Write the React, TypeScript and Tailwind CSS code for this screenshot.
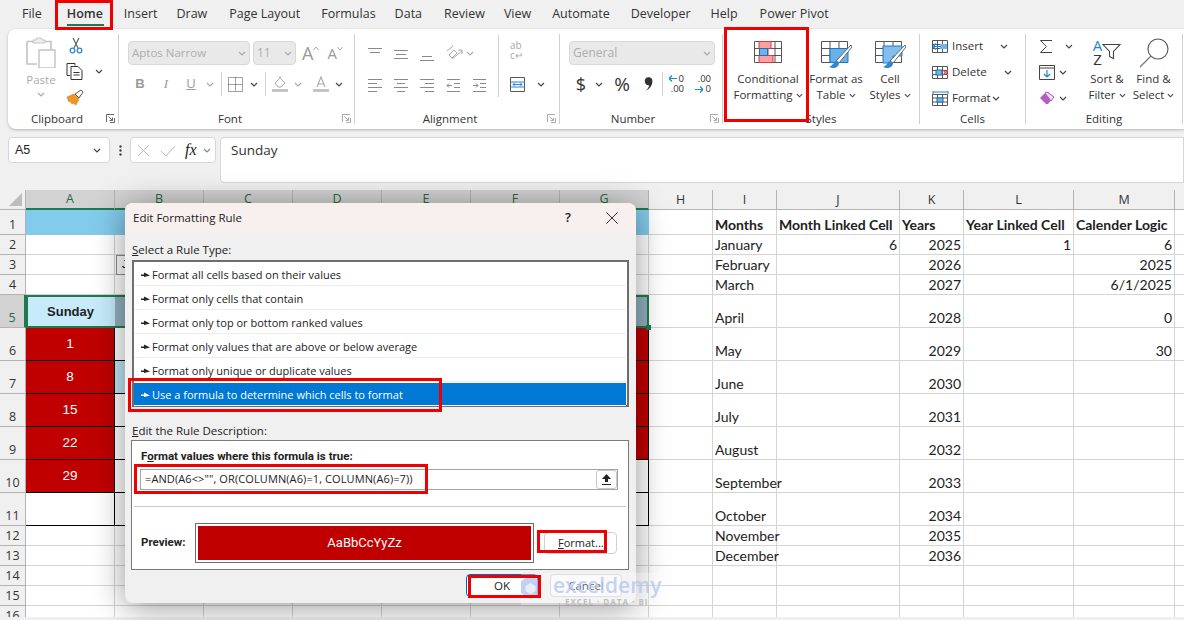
import React from "react";

const Chev = ({ c = "#444", w = 8 }: { c?: string; w?: number }) => (
  <svg width={w} height="5" viewBox="0 0 8 5" className="shrink-0"><path d="M1 1l3 3 3-3" fill="none" stroke={c} strokeWidth="1.2" /></svg>
);

const Launcher = ({ dim }: { dim?: boolean }) => (
  <svg width="9" height="9" viewBox="0 0 9 9" className="shrink-0 mb-[2px]"><path d="M.5 8V.5H8M8.5 4v4.5H4M2.5 2.5l4 4M6.5 3.5v3h-3" fill="none" stroke={dim ? "#aaa" : "#666"} strokeWidth="1" /></svg>
);

const Group = ({ w, lw, label, launcher, dim, children }: { w: number; lw: number; label: string; launcher?: boolean; dim?: boolean; children: React.ReactNode }) => (
  <div className="flex shrink-0 h-full" style={{ width: w }}>
    <div className="flex flex-col flex-1 min-w-0 h-full">
      <div className="flex-1 min-h-0">{children}</div>
      <div className="flex items-center h-[16px] mb-[2px]">
        <div className="text-center text-[#333] text-[11.5px] leading-[16px] whitespace-nowrap" style={{ width: lw }}>{label}</div>
        {launcher ? <div className="ml-auto mr-[3px] flex"><Launcher dim={dim} /></div> : null}
      </div>
    </div>
    <div className="w-px bg-[#d0d0d0] my-[5px] shrink-0" />
  </div>
);

const Lines = ({ rows }: { rows: [number, number, number][] }) => (
  <svg width="15" height="15" viewBox="0 0 15 15" className="shrink-0">
    {rows.map(([y, a, b], i) => <path key={i} d={`M${a} ${y + 0.5}H${b}`} stroke="#8a8a8a" strokeWidth="1" />)}
  </svg>
);

const Scissors = () => (
  <svg width="14" height="17" viewBox="0 0 14 17"><path d="M4 1l5 10M10 1L5 11" stroke="#555" strokeWidth="1.1" fill="none" /><circle cx="3.5" cy="13.5" r="2.3" fill="none" stroke="#2b88d8" strokeWidth="1.3" /><circle cx="10.5" cy="13.5" r="2.3" fill="none" stroke="#2b88d8" strokeWidth="1.3" /></svg>
);
const CopyIcon = () => (
  <svg width="18" height="17" viewBox="0 0 18 17"><path d="M9 2.5V.5H1v12h3" fill="none" stroke="#333" strokeWidth="1" /><path d="M5 3.5h7l4 4v9H5z" fill="#fff" stroke="#333" strokeWidth="1" /><path d="M7.5 9.5h6M7.5 12h6" stroke="#333" /></svg>
);
const Painter = () => (
  <svg width="18" height="17" viewBox="0 0 18 17"><path d="M1 8l7-3 5 5-3 6-3-2-1 1-2-3-1 1z" fill="#f29423" stroke="#d9791a" strokeWidth=".6" /><path d="M9 5l4 4 4-6-2-2z" fill="#fff" stroke="#555" strokeWidth="1" /></svg>
);
const ClipIcon = () => (
  <svg width="30" height="31" viewBox="0 0 30 31"><path d="M1 4.5h6M19 4.5h6V13M1 4.5V27h10" fill="none" stroke="#c3c3c3" strokeWidth="1.6" /><path d="M7 6V3h3l1-2h4l1 2h3v3z" fill="#eee" stroke="#c3c3c3" /><path d="M13 13h16v18H13z" fill="#fff" stroke="#c3c3c3" strokeWidth="1.4" /></svg>
);
const BigA = ({ size, up }: { size: number; up: boolean }) => (
  <span className="flex items-start text-[#9a9a9a]"><span style={{ fontSize: size, lineHeight: "22px" }}>A</span><svg width="6" height="5" viewBox="0 0 6 5" className="mt-[4px]"><path d={up ? "M.5 4L3 1l2.5 3" : "M.5 1L3 4l2.5-3"} fill="none" stroke="#a8a8a8" /></svg></span>
);
const Borders = () => (
  <svg width="15" height="15" viewBox="0 0 15 15"><path d="M.5.5h14v14H.5zM7.500.5v14M.5 7.500h14" fill="none" stroke="#444" strokeDasharray="1 1" /></svg>
);
const Fill = () => (
  <svg width="16" height="16" viewBox="0 0 16 16"><path d="M3 7l5-5 5 5-4 4H6z" fill="none" stroke="#aaa" strokeWidth="1" /><path d="M8 2V0" stroke="#aaa" /><rect y="13" width="16" height="3" fill="#c4c4c4" /></svg>
);
const FontColor = () => (
  <svg width="16" height="16" viewBox="0 0 16 16"><path d="M4 11L8 1l4 10M5.4 8h5.2" fill="none" stroke="#aaa" strokeWidth="1.1" /><rect y="13" width="16" height="3" fill="#c4c4c4" /></svg>
);
const Orient = () => (
  <svg width="17" height="16" viewBox="0 0 17 16"><path d="M1 6l6-5M3 10l5-5 3 3-5 5z" fill="none" stroke="#aaa" /><path d="M6 14L16 6M12 5h4v4" fill="none" stroke="#aaa" /></svg>
);
const Merge = () => (
  <svg width="15" height="15" viewBox="0 0 15 15"><path d="M.5.5h14v14H.5z" fill="#fff" stroke="#555" /><path d="M.5 5h14M.5 10h14" stroke="#2b88d8" /><path d="M3 7.500h9M3 7.500l2-2M3 7.500l2 2M12 7.500l-2-2M12 7.500l-2 2" stroke="#2b88d8" fill="none" /></svg>
);
const Dec = ({ left }: { left: boolean }) => (
  <span className="flex flex-col items-end text-[9.5px] leading-[10px] text-[#333] w-[16px] relative">
    <span>{left ? "0" : ".00"}</span>
    <span>{left ? ".00" : "0"}</span>
    <svg width="9" height="7" viewBox="0 0 9 7" className={left ? "absolute left-0 top-[1px]" : "absolute left-0 bottom-[1px]"}>
      <path d={left ? "M9 3.500H1M1 3.500l3-3M1 3.500l3 3" : "M0 3.500h8M8 3.500l-3-3M8 3.500l-3 3"} fill="none" stroke="#1a86d0" strokeWidth="1.1" />
    </svg>
  </span>
);
const CondIcon = () => (
  <svg width="28" height="22" viewBox="0 0 28 22">
    <path d="M.5.5h27v21H.5zM.5 7.500h27M.5 14.500h27M7 .5v21M14 .5v21M21 .5v21" fill="none" stroke="#555" />
    <path d="M5 .5h12v7H5z" fill="#ff9ea3" stroke="#e03a3a" />
    <path d="M5 14.500h14v7H5z" fill="#ff9ea3" stroke="#e03a3a" />
    <path d="M5.500 7.500h8v7h-8z" fill="#74b1e4" stroke="#1b6fb8" />
  </svg>
);
const TableBrush = ({ full }: { full: boolean }) => (
  <svg width="31" height="28" viewBox="0 0 31 28">
    <path d="M.5.5h26v21H.5zM.5 7.500h26M.5 14.500h26M9 .5v21M18 .5v21" fill="none" stroke="#555" />
    {full ? <path d="M8 5h19v10H18v7H8z" fill="#85bdee" stroke="#1a79c7" /> : <path d="M9 7.500h18v14H9z" fill="#6cb0e8" stroke="#1a79c7" />}
    <path d="M30 4l-15 16 3 2L31 6z" fill="#fff" stroke="#666" />
    <path d="M15 20c-3 1-2 4-7 6 4 2 10 1 10-4z" fill="#2b88d8" />
  </svg>
);
const CellIns = ({ kind }: { kind: "i" | "d" | "f" }) => (
  <svg width="17" height="15" viewBox="0 0 17 15">
    {kind === "f" ? <path d="M1 1h15M1 0v3M16 0v3" stroke="#1b88d6" fill="none" /> : null}
    <path d={kind === "f" ? "M.5 3.500h15v11H.5zM5.500 3.500v11M10.500 3.500v11M.5 7h15M.5 11h15" : "M.5 1.500h15v12H.5zM5.500 1.500v12M10.500 1.500v12M.5 5.500h15M.5 9.500h15"} fill="none" stroke="#555" />
    {kind === "i" ? <><rect x="8" y="5" width="7" height="5" fill="#73b5ea" /><path d="M9 7.500H1M1 7.500l3-3M1 7.500l3 3" stroke="#1b88d6" fill="none" strokeWidth="1.2" /></> : null}
    {kind === "d" ? <><rect x="4" y="5" width="6" height="5" fill="#73b5ea" stroke="#1b6fb8" /><path d="M11 5l5 5M16 5l-5 5" stroke="#e84a4a" strokeWidth="1.2" /></> : null}
    {kind === "f" ? <rect x="5" y="7" width="6" height="4" fill="#73b5ea" stroke="#1b6fb8" /> : null}
  </svg>
);
const FillDown = () => (
  <svg width="16" height="15" viewBox="0 0 16 15"><path d="M.5.5h15v14H.5z" fill="#fff" stroke="#444" /><path d="M.5 3h15" stroke="#444" /><path d="M8 5v7M8 12l-3-3M8 12l3-3" stroke="#1b88d6" fill="none" strokeWidth="1.2" /></svg>
);
const Eraser = () => (
  <svg width="16" height="14" viewBox="0 0 16 14"><path d="M1 7l6-6 2 0 6 5-6 7-2 0z" fill="#b65bbf" /><path d="M6 2l2-1 7 5-3 4z" fill="#f3e3f5" stroke="#b65bbf" /></svg>
);
const Sigma = () => (
  <svg width="14" height="15" viewBox="0 0 14 15"><path d="M13 1.500H1.500L7.500 7.500 1.500 13.500H13" fill="none" stroke="#444" strokeWidth="1" /></svg>
);
const SortIcon = () => (
  <span className="flex items-center h-[28px]">
    <span className="flex flex-col items-center text-[15px] leading-[14px]"><span className="text-[#1b88d6]">A</span><span className="text-[#333]">Z</span></span>
    <svg width="19" height="17" viewBox="0 0 19 17" className="mb-[1px]"><path d="M1 1.500h17l-6.500 7v7l-4-2v-5z" fill="none" stroke="#444" strokeWidth="1.1" /></svg>
  </span>
);
const Magnifier = () => (
  <svg width="30" height="30" viewBox="0 0 30 30"><circle cx="19" cy="11" r="10" fill="none" stroke="#555" strokeWidth="1.1" /><path d="M12 18L1 29" stroke="#777" strokeWidth="1.3" /></svg>
);

const TwoLine = ({ a, b, w, icon }: { a: string; b: string; w: number; icon: React.ReactNode }) => (
  <div className="flex flex-col items-center shrink-0 pt-[9px]" style={{ width: w }}>
    <div className="h-[33px] flex items-start justify-center">{icon}</div>
    <div className="text-[11.5px] leading-[16px] text-[#333] whitespace-nowrap">{a}</div>
    <div className="text-[11.5px] leading-[16px] text-[#333] whitespace-nowrap flex items-center gap-[3px]">{b}<Chev w={7} /></div>
  </div>
);

const SmallRow = ({ icon, label, gap }: { icon: React.ReactNode; label: string; gap: number }) => (
  <div className="flex items-center h-[26px] pl-[12px] text-[11.5px] text-[#333]">
    <span className="w-[20px] flex">{icon}</span>{label}<span className="flex" style={{ marginLeft: gap }}><Chev /></span>
  </div>
);

const Ribbon = () => (
  <div className="ml-[8px] h-[100px] bg-white rounded-l-lg flex shadow-[0_1px_3px_rgba(0,0,0,0.25)]">
    <Group w={111} lw={98} label="Clipboard" launcher>
      <div className="flex pt-[8px]">
        <div className="w-[58px] flex flex-col items-center pl-[8px]">
          <ClipIcon />
          <div className="text-[11.5px] leading-[16px] mt-[4px] text-[#aaa]">Paste</div>
          <div className="mt-[4px]"><Chev c="#aaa" /></div>
        </div>
        <div className="flex flex-col">
          <div className="h-[26px] pl-[3px]"><Scissors /></div>
          <div className="h-[17px] flex items-center"><CopyIcon /><span className="ml-[11px] flex"><Chev /></span></div>
          <div className="mt-[9px] flex"><Painter /></div>
        </div>
      </div>
    </Group>
    <Group w={236} lw={222} label="Font" launcher dim>
      <div className="flex mt-[12px] pl-[9px] items-center h-[24px]">
        <div className="w-[122px] h-[24px] bg-[#e9e9e9] border border-[#d8d8d8] rounded-[4px] flex items-center justify-between px-[3px] text-[11.5px] text-[#aeaeae]">Aptos Narrow<Chev c="#aaa" /></div>
        <div className="w-[43px] ml-[3px] h-[24px] bg-[#e9e9e9] border border-[#d8d8d8] rounded-[4px] flex items-center justify-between px-[3px] text-[12px] text-[#aeaeae]">11<Chev c="#aaa" /></div>
        <div className="ml-[6px]"><BigA size={18} up /></div>
        <div className="ml-[8px]"><BigA size={15} up={false} /></div>
      </div>
      <div className="flex items-center h-[20px] mt-[9px] pl-[14px] text-[#9a9a9a] text-[13px]">
        <b className="w-[14px] text-center font-['Liberation_Sans',sans-serif]">B</b>
        <i className="w-[14px] ml-[12px] text-center font-['Liberation_Serif',serif]">I</i>
        <u className="w-[14px] ml-[11px] text-center">U</u>
        <span className="ml-[8px] flex"><Chev c="#aaa" /></span>
        <span className="w-px h-[24px] bg-[#d0d0d0] ml-[7px]" />
        <span className="ml-[6px] flex"><Borders /></span>
        <span className="ml-[7px] flex"><Chev /></span>
        <span className="w-px h-[24px] bg-[#d0d0d0] ml-[7px]" />
        <span className="ml-[6px] flex"><Fill /></span>
        <span className="ml-[6px] flex"><Chev c="#aaa" /></span>
        <span className="ml-[11px] flex"><FontColor /></span>
        <span className="ml-[6px] flex"><Chev /></span>
      </div>
    </Group>
    <Group w={205} lw={190} label="Alignment" launcher dim>
      <div className="flex pt-[6px] h-[70px]">
        <div className="pl-[13px] w-[143px] flex flex-col">
          <div className="flex h-[30px] items-center gap-[11px] pt-[6px]">
            <Lines rows={[[2, 0, 14], [6, 2, 12], [10, 15, 15]]} />
            <Lines rows={[[4, 0, 14], [8, 2, 12], [12, 0, 14]]} />
            <Lines rows={[[6, 15, 15], [10, 2, 12], [14, 0, 14]]} />
            <span className="flex"><Orient /></span>
            <span className="ml-[-8px] flex"><Chev c="#aaa" /></span>
          </div>
          <div className="flex h-[20px] items-center gap-[11px] mt-[9px]">
            <Lines rows={[[2, 0, 14], [6, 0, 9], [10, 0, 14], [14, 0, 9]]} />
            <Lines rows={[[2, 0, 14], [6, 3, 11], [10, 0, 14], [14, 3, 11]]} />
            <Lines rows={[[2, 0, 14], [6, 5, 14], [10, 0, 14], [14, 5, 14]]} />
            <svg width="15" height="15" viewBox="0 0 15 15"><path d="M1 2.500h13M8 6.500h6M8 10.500h6M1 14.500h13M6 8.500H1M1 8.500l2-2M1 8.500l2 2" fill="none" stroke="#8a8a8a" /></svg>
            <svg width="15" height="15" viewBox="0 0 15 15"><path d="M1 2.500h13M8 6.500h6M8 10.500h6M1 14.500h13M1 8.500h5M6 8.500l-2-2M6 8.500l-2 2" fill="none" stroke="#8a8a8a" /></svg>
          </div>
        </div>
        <div className="w-px h-[62px] bg-[#d0d0d0]" />
        <div className="flex flex-col pl-[11px]">
          <div className="h-[29px] pt-[5px] text-[#aaa] text-[10px] leading-[10px] w-[18px]"><div>ab</div><div>c↵</div></div>
          <div className="flex items-center mt-[13px] h-[15px]"><Merge /><span className="ml-[12px] flex"><Chev /></span></div>
        </div>
      </div>
    </Group>
    <Group w={163} lw={146} label="Number" launcher dim>
      <div className="pl-[9px] pt-[12px]">
        <div className="w-[146px] h-[24px] bg-[#e9e9e9] border border-[#d8d8d8] rounded-[4px] flex items-center justify-between px-[3px] text-[12px] text-[#aeaeae]">General<Chev c="#aaa" /></div>
        <div className="flex items-center h-[24px] mt-[7px] text-[#333]">
          <span className="ml-[5px] text-[18px] w-[14px] text-center leading-none">$</span>
          <span className="ml-[7px] flex"><Chev /></span>
          <span className="ml-[9px] text-[19px] w-[20px] text-center leading-none">%</span>
          <svg width="9" height="14" viewBox="0 0 8 12" className="ml-[12px]"><path d="M4 0a3.500 3.500 0 0 1 3.500 3.500C7.500 7 5 10.500 1.500 12 3.500 10 4.500 8.500 4.500 7A3.500 3.500 0 0 1 4 0z" fill="#333" /></svg>
          <span className="w-px h-[24px] bg-[#d0d0d0] ml-[9px]" />
          <span className="ml-[5px] flex"><Dec left /></span>
          <span className="ml-[11px] flex"><Dec left={false} /></span>
        </div>
      </div>
    </Group>
    <Group w={197} lw={196} label="Styles">
      <div className="flex pl-[6px]">
        <TwoLine a="Conditional" b="Formatting" w={78} icon={<div className="pt-[3px]"><CondIcon /></div>} />
        <TwoLine a="Format as" b="Table" w={58} icon={<div className="pt-[3px]"><TableBrush full={false} /></div>} />
        <TwoLine a="Cell" b="Styles" w={50} icon={<div className="pt-[3px]"><TableBrush full /></div>} />
      </div>
    </Group>
    <Group w={106} lw={106} label="Cells">
      <div className="pt-[4px]">
        <SmallRow icon={<CellIns kind="i" />} label="Insert" gap={17} />
        <SmallRow icon={<CellIns kind="d" />} label="Delete" gap={17} />
        <SmallRow icon={<CellIns kind="f" />} label="Format" gap={1} />
      </div>
    </Group>
    <Group w={157} lw={156} label="Editing">
      <div className="flex">
        <div className="w-[59px] pl-[13px] pt-[4px] flex flex-col">
          <div className="h-[26px] flex items-center"><Sigma /><span className="ml-[12px] flex"><Chev /></span></div>
          <div className="h-[26px] flex items-center"><FillDown /><span className="ml-[4px] flex"><Chev /></span></div>
          <div className="h-[26px] flex items-center"><Eraser /><span className="ml-[4px] flex"><Chev /></span></div>
        </div>
        <TwoLine a="Sort &" b="Filter" w={44} icon={<SortIcon />} />
        <TwoLine a="Find &" b="Select" w={49} icon={<Magnifier />} />
      </div>
    </Group>
  </div>
);

const tabs: [string, string][] = [
  ["File", ""], ["Home", "ml-[4px] w-[37px] -mr-[1px]"], ["Insert", ""], ["Draw", "-ml-[2px]"], ["Page Layout", "ml-[1px]"], ["Formulas", ""], ["Data", "-ml-[2px]"], ["Review", "ml-[1px]"], ["View", "-ml-[2px]"], ["Automate", ""], ["Developer", ""], ["Help", "-ml-[1px]"], ["Power Pivot", "ml-[1px]"],
];

const FormulaBar = () => (
  <div className="flex h-[46px] mt-[8px] mb-[7px] ml-[8px]">
    <div className="w-[102px] h-[26px] bg-white border border-[#d6d6d6] rounded-[4px] flex items-center justify-between pl-[6px] pr-[7px] text-[12.5px] text-[#222] font-['Liberation_Sans',sans-serif]">A5<Chev w={10} /></div>
    <div className="w-[20px] h-[26px] flex items-center justify-center text-[#444]"><svg width="3" height="11" viewBox="0 0 3 11"><circle cx="1.5" cy="1.5" r="1.2" fill="#444" /><circle cx="1.5" cy="5.5" r="1.2" fill="#444" /><circle cx="1.5" cy="9.5" r="1.2" fill="#444" /></svg></div>
    <div className="w-[86px] h-[26px] bg-white border border-[#d6d6d6] rounded-[4px] flex items-center pl-[6px]">
      <svg width="13" height="13" viewBox="0 0 13 13"><path d="M1 1l11 11M12 1L1 12" stroke="#b8b8b8" /></svg>
      <svg width="16" height="13" viewBox="0 0 16 13" className="ml-[10px]"><path d="M1 7l5 5 9-10" fill="none" stroke="#b8b8b8" /></svg>
      <i className="ml-[9px] text-[16px] leading-none font-['Liberation_Serif',serif] text-[#222]">fx</i>
      <span className="ml-[5px] flex"><Chev c="#888" w={10} /></span>
    </div>
    <div className="ml-[4px] flex-1 h-[46px] bg-white border border-[#d6d6d6] rounded-l-[4px] pl-[10px] pt-[2px] text-[13.5px] leading-[20px] text-[#333]">Sunday</div>
  </div>
);

const colW = "grid-cols-[26px_89px_89px_89px_89px_89px_89px_89px_64px_64px_123px_64px_110px_101px_64px]";
const rowH = "grid-rows-[20px_25px_20px_20px_20px_33px_33px_33px_33px_33px_33px_33px_20px_20px_20px_20px_20px]";
const cols = ["A", "B", "C", "D", "E", "F", "G", "H", "I", "J", "K", "L", "M", "N"];

const data: Record<number, Record<string, string>> = {
  1: { I: "Months", J: "Month Linked Cell", K: "Years", L: "Year Linked Cell", M: "Calender Logic" },
  2: { I: "January", J: "6", K: "2025", L: "1", M: "6" },
  3: { I: "February", K: "2026", M: "2025" },
  4: { I: "March", K: "2027", M: "6/1/2025" },
  5: { I: "April", K: "2028", M: "0" },
  6: { I: "May", K: "2029", M: "30" },
  7: { I: "June", K: "2030" },
  8: { I: "July", K: "2031" },
  9: { I: "August", K: "2032" },
  10: { I: "September", K: "2033" },
  11: { I: "October", K: "2034" },
  12: { I: "November", K: "2035" },
  13: { I: "December", K: "2036" },
};
const calA: Record<number, string> = { 6: "1", 7: "8", 8: "15", 9: "22", 10: "29" };
const inCal = "ABCDEFG";

const cellClass = (r: number, c: string) => {
  const isCal = inCal.includes(c);
  if (r === 1 && isCal) return "bg-[#83cbeb]";
  if (r === 5 && c === "A") return "bg-[#c8ebfb] border-t-2 border-b-2 border-l-2 border-[#1f7a4d]";
  if (r === 5 && isCal) return c === "G" ? "bg-[#94b1bf] border-t-2 border-b-2 border-r-2 border-[#1f7a4d]" : "bg-[#94b1bf] border-t-2 border-b-2 border-[#1f7a4d]";
  if (r >= 6 && r <= 11 && isCal) {
    if (r <= 10 && c === "A") return "bg-[#c00000] border-r border-b border-black";
    if (r <= 9 && c === "G") return "bg-[#c00000] border-r border-b border-black";
    if (r === 7 && c === "B") return "bg-[#c0e6f5] border-r border-b border-black";
    return "bg-white border-r border-b border-black";
  }
  return "bg-white border-r border-b border-[#d4d4d4]";
};

const alignClass = (r: number, c: string) => {
  if (c === "A" && (r === 5 || calA[r])) return "items-center justify-center";
  if (c === "I") return "items-end justify-start z-[1]";
  if (r === 1) return "items-end justify-start";
  return "items-end justify-end";
};

const Sheet = () => {
  const rows = Array.from({ length: 16 }, (_, i) => i + 1);
  return (
    <div className={`grid ${colW} ${rowH} h-[427px] w-[1184px] overflow-hidden font-['Lato',sans-serif]`}>
      <div className="bg-[#f0f0f0] border-r border-b border-[#b4b4b4] flex items-end justify-end pr-[3px] pb-[3px]">
        <svg width="13" height="13" viewBox="0 0 13 13"><path d="M13 0v13H0z" fill="#bdbdbd" /></svg>
      </div>
      {cols.map((c) => (
        <div key={c} className={inCal.includes(c)
          ? "bg-[#d2d2d2] border-r border-[#b4b4b4] border-b-2 border-b-[#1f7a4d] text-[#1f6b42] text-center text-[12.5px] leading-[18px] font-['Open_Sans',sans-serif]"
          : "bg-[#f0f0f0] border-r border-b border-[#b4b4b4] text-[#333] text-center text-[12.5px] leading-[19px] font-['Open_Sans',sans-serif]"}>{c}</div>
      ))}
      {rows.map((r) => (
        <React.Fragment key={r}>
          <div className={r === 5
            ? "bg-[#d2d2d2] border-r-2 border-r-[#1f7a4d] border-b border-[#b4b4b4] text-[#1f6b42] flex items-end justify-center text-[12.5px] font-['Open_Sans',sans-serif] leading-[18px]"
            : "bg-[#f0f0f0] border-r border-b border-[#b4b4b4] text-[#333] flex items-end justify-center text-[12.5px] font-['Open_Sans',sans-serif] leading-[18px]"}>{r}</div>
          {cols.map((c) => {
            const v = data[r]?.[c];
            return (
              <div key={c} className={`${cellClass(r, c)} relative flex min-w-0 ${alignClass(r, c)} pl-[2px] pr-[2px]`}>
                {r === 5 && c === "A" ? <span className="font-bold text-[13px] text-[#222] mr-[2px] font-['Liberation_Sans',sans-serif]">Sunday</span> : null}
                {c === "A" && calA[r] ? <span className="text-white text-[13.5px] font-['Liberation_Sans',sans-serif]">{calA[r]}</span> : null}
                {v ? <span className={`whitespace-nowrap text-[14px] leading-[18px] text-[#222] ${r === 1 ? "font-bold" : ""}`}>{v}</span> : null}
              </div>
            );
          })}
        </React.Fragment>
      ))}
    </div>
  );
};

const rules = [
  "Format all cells based on their values",
  "Format only cells that contain",
  "Format only top or bottom ranked values",
  "Format only values that are above or below average",
  "Format only unique or duplicate values",
  "Use a formula to determine which cells to format",
];

const Arrow = ({ c }: { c: string }) => (
  <svg width="9" height="7" viewBox="0 0 9 7" className="shrink-0"><path d="M0 2.500h3V.5l6 3-6 1.500V4H0z" fill={c} /></svg>
);

const Dialog = () => (
  <div className="absolute z-20 left-[125px] top-[203px] w-[511px] h-[400px] bg-[#f0f0f0] rounded-[8px] shadow-[0_4px_32px_rgba(0,0,0,0.42)] overflow-hidden text-[11.5px] text-[#222] font-['Open_Sans',sans-serif]">
    <div className="h-[30px] bg-[#f7f0ee] flex items-center pl-[8px]">
      <span className="text-[11.5px]">Edit Formatting Rule</span>
      <span className="ml-auto text-[13px] font-semibold mr-[35px]">?</span>
      <svg width="12" height="12" viewBox="0 0 12 12" className="mr-[18px]"><path d="M.5.5l11 11M11.500.5l-11 11" stroke="#333" /></svg>
    </div>
    <div className="pl-[7px] pt-[9px] leading-[16px]"><u>S</u>elect a Rule Type:</div>
    <div className="ml-[7px] mt-[2px] w-[497px] h-[147px] border-2 border-[#6e6e6e] bg-white flex flex-col text-[11px]">
      {rules.map((t, i) => (
        <div key={t} className={i === 5
          ? "h-[24px] mr-[1px] shrink-0 flex items-center gap-[2px] pl-[7px] pt-[2px] bg-[#0078d4] text-white border-y border-white"
          : "h-[24px] mx-[1px] shrink-0 flex items-center gap-[2px] pl-[6px] pt-[3px] border-b border-[#eeeeee]"}>
          <Arrow c={i === 5 ? "#fff" : "#222"} /><span>{t}</span>
        </div>
      ))}
    </div>
    <div className="pl-[7px] mt-[16px] leading-[16px]"><u>E</u>dit the Rule Description:</div>
    <div className="ml-[6px] mt-[1px] w-[498px] h-[130px] border border-[#7a7a7a] bg-white">
      <div className="pl-[9px] pt-[7px] font-bold leading-[16px] font-['Roboto',sans-serif]">F<u>o</u>rmat values where this formula is true:</div>
      <div className="ml-[8px] mt-[5px] w-[478px] h-[21px] border border-[#a5a5a5] flex items-center pl-[4px] text-[11px] tracking-[0.1px]">
        <span>=AND(A6&lt;&gt;"", OR(COLUMN(A6)=1, COLUMN(A6)=7))</span>
        <span className="ml-auto w-[21px] h-[19px] bg-white border border-[#c8c8c8] rounded-[3px] flex items-center justify-center">
          <svg width="11" height="11" viewBox="0 0 11 11"><path d="M5.500 0L10 5H7v3H4V5H1zM1 10h9v1H1z" fill="#222" /></svg>
        </span>
      </div>
      <div className="mx-[2px] mt-[16px] h-px bg-[#c8c8c8]" />
      <div className="flex items-center mt-[16px] pl-[9px]">
        <span className="font-bold w-[54px] font-['Roboto',sans-serif]">Preview:</span>
        <div className="w-[339px] h-[40px] border border-[#6e6e6e] p-[2px] bg-white">
          <div className="w-full h-full bg-[#c00000] text-white flex items-center justify-center text-[13px] font-['Roboto',sans-serif]">AaBbCcYyZz</div>
        </div>
        <div className="ml-[10px] w-[73px] h-[22px] bg-white border border-[#d0d0d0] rounded-[4px] flex items-center pl-[13px] text-[11px]"><u>F</u>ormat...</div>
      </div>
    </div>
    <div className="flex pl-[341px] pt-[4px] gap-[12px]">
      <div className="w-[72px] h-[23px] bg-white border border-[#0067c0] rounded-[4px] flex items-center justify-center">OK</div>
      <div className="w-[72px] h-[23px] bg-[#f8f8f8] border border-[#d0d0d0] rounded-[4px] flex items-center justify-center">Cancel</div>
    </div>
  </div>
);

const redBoxes = [
  "left-[55px] top-0 w-[58px] h-[30px]",
  "left-[724px] top-[27px] w-[85px] h-[95px]",
  "left-[128px] top-[378px] w-[314px] h-[34px]",
  "left-[134px] top-[464px] w-[294px] h-[30px]",
  "left-[537px] top-[530px] w-[70px] h-[23px]",
  "left-[468px] top-[575px] w-[73px] h-[23px]",
];

export default function App() {
  return (
    <div className="relative w-[1184px] h-[620px] overflow-hidden bg-[#f0f0f0] font-['Open_Sans',sans-serif]">
      <div className="flex h-[29px] items-center pl-[22px] gap-[21px] text-[12.5px] text-[#333]">
        {tabs.map(([t, cls]) => (
          t === "Home"
            ? <div key={t} className={`relative h-full flex items-center font-semibold whitespace-nowrap ${cls}`}>{t}<span className="absolute left-0 right-0 bottom-[3px] h-[2px] bg-[#1f7a4d]" /></div>
            : <div key={t} className={cls}>{t}</div>
        ))}
      </div>
      <Ribbon />
      <FormulaBar />
      <Sheet />
      <div className="h-[3px] bg-[#f0f0f0]" />
      <div className="absolute z-10 left-[116px] top-[255px] w-[20px] h-[20px] bg-white border border-[#8a8a8a] text-[11px] pl-[5px] font-['Liberation_Sans',sans-serif]">J</div>
      <div className="absolute z-10 left-[646px] top-[325px] w-[5px] h-[5px] bg-[#1f7a4d]" />
      <Dialog />
      <div className="absolute z-30 left-[521px] top-[573px] w-[142px] h-[32px] bg-white/30 flex items-start font-['Open_Sans',sans-serif] pointer-events-none">
        <svg width="19" height="24" viewBox="0 0 19 24" className="mt-[2px] shrink-0"><path d="M9.500 0L19 6v12l-9.500 6L0 18V6z" fill="#a9bcf0" opacity=".7" /><path d="M9.500 8l5 3v5l-5 3-5-3v-5z" fill="#e9edf7" /></svg>
        <div className="ml-[13px] flex flex-col items-start">
          <span className="text-[21px] leading-[24px] font-semibold text-[#b7c6ef]/80">exceldemy</span>
          <span className="ml-[12px] text-[8px] leading-[9px] font-bold tracking-[1px] text-[#bdbdbd] whitespace-nowrap">EXCEL · DATA · BI</span>
        </div>
      </div>
      {redBoxes.map((b) => <div key={b} className={`absolute z-40 ${b} border-[3px] border-[#f00000] pointer-events-none`} />)}
    </div>
  );
}
